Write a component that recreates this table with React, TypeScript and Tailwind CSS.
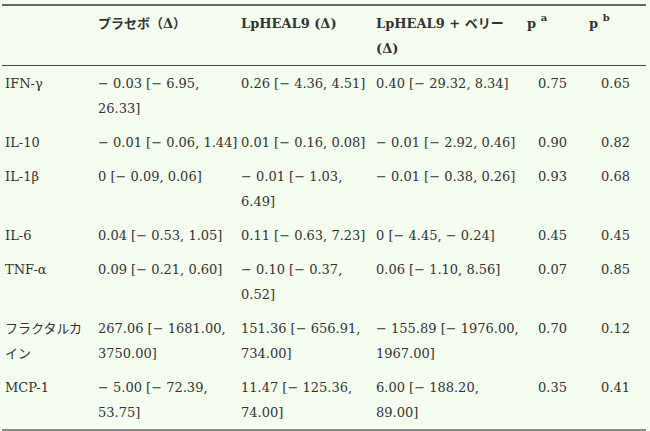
const font = { fontFamily: '"DejaVu Serif", "Noto Sans CJK JP", serif' };

type Row = { name: string; placebo: string; lp: string; berry: string; pa: string; pb: string };

const rows: Row[] = [
  { name: "IFN-γ", placebo: "− 0.03 [− 6.95, 26.33]", lp: "0.26 [− 4.36, 4.51]", berry: "0.40 [− 29.32, 8.34]", pa: "0.75", pb: "0.65" },
  { name: "IL-10", placebo: "− 0.01 [− 0.06, 1.44]", lp: "0.01 [− 0.16, 0.08]", berry: "− 0.01 [− 2.92, 0.46]", pa: "0.90", pb: "0.82" },
  { name: "IL-1β", placebo: "0 [− 0.09, 0.06]", lp: "− 0.01 [− 1.03, 6.49]", berry: "− 0.01 [− 0.38, 0.26]", pa: "0.93", pb: "0.68" },
  { name: "IL-6", placebo: "0.04 [− 0.53, 1.05]", lp: "0.11 [− 0.63, 7.23]", berry: "0 [− 4.45, − 0.24]", pa: "0.45", pb: "0.45" },
  { name: "TNF-α", placebo: "0.09 [− 0.21, 0.60]", lp: "− 0.10 [− 0.37, 0.52]", berry: "0.06 [− 1.10, 8.56]", pa: "0.07", pb: "0.85" },
  { name: "フラクタルカイン", placebo: "267.06 [− 1681.00, 3750.00]", lp: "151.36 [− 656.91, 734.00]", berry: "− 155.89 [− 1976.00, 1967.00]", pa: "0.70", pb: "0.12" },
  { name: "MCP-1", placebo: "− 5.00 [− 72.39, 53.75]", lp: "11.47 [− 125.36, 74.00]", berry: "6.00 [− 188.20, 89.00]", pa: "0.35", pb: "0.41" },
];

const App = () => {
  return (
    <div className="w-[650px] h-[431px] bg-[#f5fdf0] px-[2px] pt-[4px] overflow-hidden" style={font}>
      <table className="w-[644px] table-fixed border-collapse text-[13px] leading-[25px] text-[#333] border-t-2 border-b-2 border-t-[#666] border-b-[#888]">
        <colgroup>
          <col className="w-[92px]" />
          <col className="w-[145px]" />
          <col className="w-[135px]" />
          <col className="w-[146px]" />
          <col className="w-[65px]" />
          <col className="w-[61px]" />
        </colgroup>
        <thead>
          <tr className="border-b border-[#444] align-top">
            <th className="pl-[3px] py-[4.5px]"></th>
            <th className="pl-[4px] py-[4.5px] text-left font-bold">プラセボ（Δ）</th>
            <th className="pl-[2px] py-[4.5px] text-left font-bold">LpHEAL9 (Δ)</th>
            <th className="pl-[2px] py-[4.5px] text-left font-bold">LpHEAL9 + ベリー (Δ)</th>
            <th className="pl-[7px] py-[4.5px] text-left font-bold">
              p <sup className="text-[10px] -top-[0.7em]">a</sup>
            </th>
            <th className="pl-[4px] py-[4.5px] text-left font-bold">
              p <sup className="text-[10px] -top-[0.7em]">b</sup>
            </th>
          </tr>
        </thead>
        <tbody>
          {rows.map((r) => (
            <tr key={r.name} className="align-top">
              <td className="pl-[3px] py-[4.5px]">{r.name}</td>
              <td className="pl-[4px] py-[4.5px]">{r.placebo}</td>
              <td className="pl-[2px] py-[4.5px]">{r.lp}</td>
              <td className="pl-[2px] py-[4.5px]">{r.berry}</td>
              <td className="py-[4.5px] text-center">{r.pa}</td>
              <td className="py-[4.5px] text-center">{r.pb}</td>
            </tr>
          ))}
        </tbody>
      </table>
    </div>
  );
};

export default App;
